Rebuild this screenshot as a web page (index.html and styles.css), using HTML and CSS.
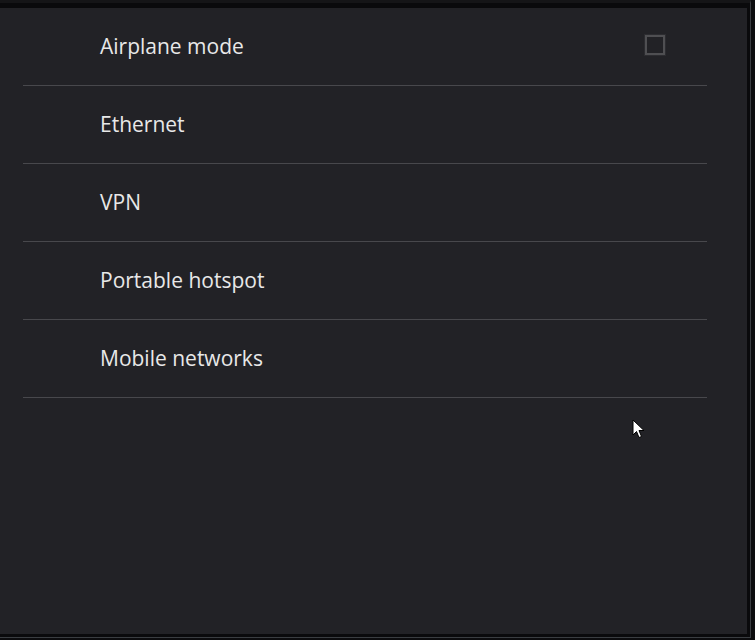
FILE: index.html
```html
<!DOCTYPE html>
<html>
<head>
<meta charset="utf-8">
<link rel="stylesheet" href="styles.css">
</head>
<body>
<div class="frame">
  <div class="panel">
    <ul class="list">
      <li class="row"><span class="label">Airplane mode</span><span class="check"></span></li>
      <li class="row"><span class="label">Ethernet</span></li>
      <li class="row"><span class="label">VPN</span></li>
      <li class="row"><span class="label">Portable hotspot</span></li>
      <li class="row"><span class="label">Mobile networks</span></li>
    </ul>
    <svg class="cursor" width="14" height="20" viewBox="0 0 14 20">
      <path d="M1 1 L1 16 L4.5 12.5 L7 18.5 L9.5 17.5 L7 11.5 L12 11.5 Z" fill="#fff" stroke="#000" stroke-width="1"/>
    </svg>
  </div>
</div>
</body>
</html>
```
FILE: styles.css
```css
html, body {
  margin: 0;
  padding: 0;
  background: #0c0c0e;
}
.frame {
  width: 750px;
  height: 634px;
  background: #0a0a0c;
  border-top: 3px solid #151517;
  border-right: 1px solid #3a3d41;
  border-bottom: 1px solid #3a3d41;
  overflow: hidden;
}
.panel {
  position: relative;
  margin-top: 5px;
  width: 747px;
  height: 626px;
  background: #222226;
}
.list {
  list-style: none;
  margin: 0 0 0 23px;
  padding: 0;
  width: 684px;
}
.row {
  height: 77px;
  border-bottom: 1px solid #48484c;
  display: flex;
  align-items: center;
  justify-content: space-between;
  padding: 0 42px 0 77px;
}
.label {
  font-family: "Open Sans", "Noto Sans", sans-serif;
  font-size: 21px;
  color: #e8e8e8;
  position: relative;
  top: -1px;
}
.check {
  width: 16px;
  height: 16px;
  border: 2px solid #4f4f52;
  box-shadow: 0 0 0 1px #2c2c30;
  position: relative;
  top: -2px;
}
.cursor {
  position: absolute;
  left: 632px;
  top: 411px;
}
```
